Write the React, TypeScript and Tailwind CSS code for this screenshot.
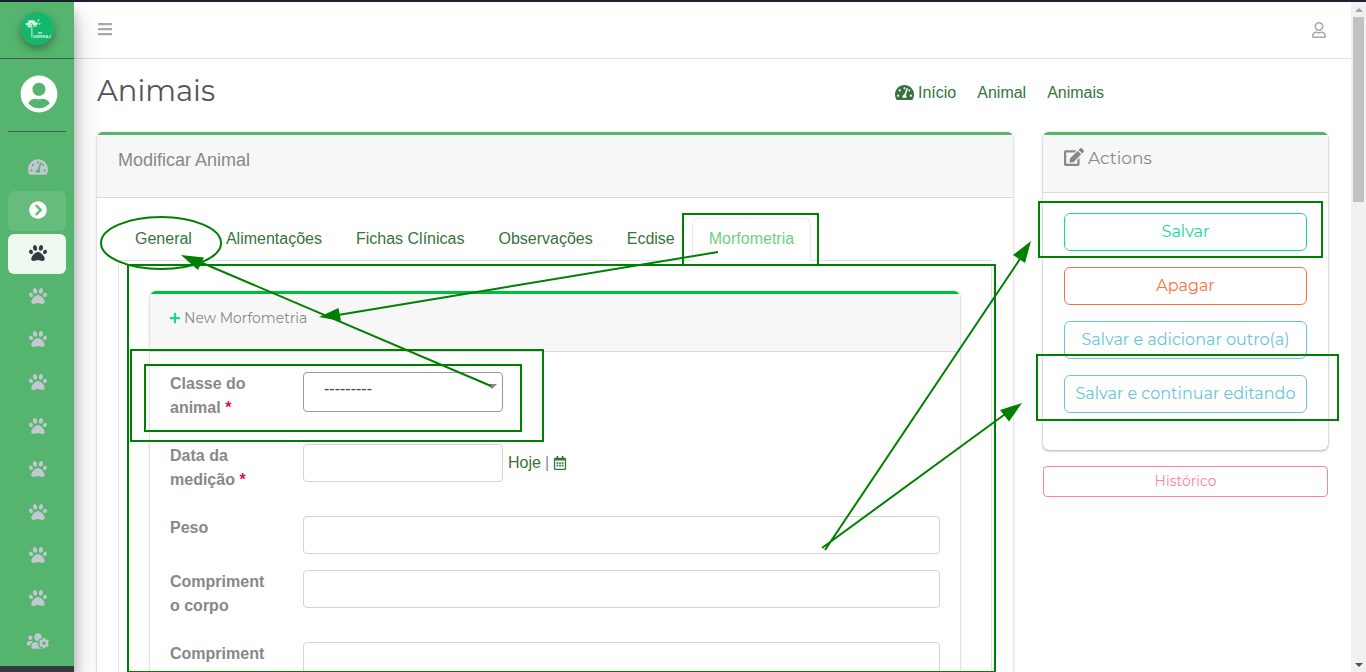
import React from "react";
import {
  FaBars, FaRegUser, FaTachometerAlt, FaChevronCircleRight, FaPaw, FaUsersCog,
  FaEdit, FaPlus, FaRegCalendarAlt, FaUserCircle,
} from "react-icons/fa";

const BODY = "font-['Liberation_Sans',Arial,sans-serif]";
const DISPLAY = "font-['Montserrat',Inter,sans-serif]";

function Logo() {
  return (
    <svg viewBox="0 0 33 33" className="size-[33px] rounded-full shadow-[0_4px_8px_rgba(0,0,0,0.35)]" role="img" aria-label="SERRAJ">
      <circle cx="16.5" cy="16.5" r="16.5" fill="#14b76d" />
      <g fill="#d4f1e0">
        <ellipse cx="7.500" cy="12" rx="3" ry="1.600" />
        <ellipse cx="10.500" cy="9.500" rx="3.600" ry="1.500" />
        <ellipse cx="14" cy="11.500" rx="3" ry="1.500" />
        <ellipse cx="8.500" cy="14.500" rx="2.200" ry="0.900" />
        <ellipse cx="14" cy="14" rx="2" ry="0.800" />
        <path d="M16 8.500l2.500-1.500-.6 2.600zM17.500 11l2.500.6-1.700 1.500zM10.200 12h.8l.4 4v9.500h-1V16z" />
        <path d="M17 20.300h4v1.200h-4z" />
      </g>
      <text x="12" y="26" fontSize="4.400" fontWeight="700" fill="#d4f1e0" fontFamily="Liberation Sans">SERRAJ</text>
    </svg>
  );
}

const paws = ["Aves", "Mamíferos", "Répteis", "Anfíbios", "Peixes", "Insetos", "Aracnídeos", "Outros"];

function Sidebar() {
  const item = "flex h-10 items-center justify-center rounded-md pb-[3px] pl-px";
  return (
    <aside className="relative z-10 flex w-[74px] shrink-0 flex-col bg-[#55b46d] text-[#c2c7d0] shadow-[0_14px_28px_rgba(0,0,0,0.25),0_10px_10px_rgba(0,0,0,0.22)]">
      <a href="#inicio" className="flex h-[57px] shrink-0 items-start justify-center border-b border-[#4b545c] pt-2.5">
        <Logo />
      </a>
      <div className="mx-2 flex h-[73px] shrink-0 items-center justify-center border-b border-[#4b545c] pb-0.5 pl-1">
        <FaUserCircle className="size-[38px] text-white" />
      </div>
      <nav className="mx-2 mt-4 flex h-[515px] shrink-0 flex-col justify-between">
        <a href="#painel" aria-label="Painel" className={item}><FaTachometerAlt className="size-5" /></a>
        <a href="#menu" aria-label="Menu" className={`${item} bg-white/10 text-white`}><FaChevronCircleRight className="size-[18px]" /></a>
        <a href="#animais" aria-label="Animais" className={`${item} bg-white/90 text-[#343a40]`}><FaPaw className="size-[18px]" /></a>
        {paws.map((p) => (
          <a key={p} href={`#${p}`} aria-label={p} className={item}><FaPaw className="size-[18px]" /></a>
        ))}
        <a href="#usuarios" aria-label="Usuários" className={item}><FaUsersCog className="size-[22px]" /></a>
      </nav>
      <div className="mt-auto h-1.5 shrink-0 bg-[#343a40]" />
    </aside>
  );
}

const tabs = ["General", "Alimentações", "Fichas Clínicas", "Observações", "Ecdise", "Morfometria"];

function Row({ id, label, required, children }: { id: string; label: string; required?: boolean; children?: React.ReactNode }) {
  return (
    <div className="mb-4 flex items-start">
      <label htmlFor={id} className="mr-8 w-[101px] shrink-0 pb-2 font-bold leading-6 wrap-anywhere">
        {label}
        {required && <>{" "}<span className="text-[#dc143c]">*</span></>}
      </label>
      {children ?? <input id={id} className="h-[38px] min-w-0 flex-1 rounded border border-[#ced4da] bg-white px-3" />}
    </div>
  );
}

function MorfometriaCard() {
  return (
    <section className="rounded-md border-t-[3px] border-[#00bc41] shadow-[0_0_1px_rgba(0,0,0,0.25),0_1px_3px_rgba(0,0,0,0.25)]">
      <h3 className={`flex h-[58px] items-start gap-[3px] border-b border-black/12 bg-[#f7f7f7] px-[19px] pt-3 text-sm leading-6 text-[#888] ${DISPLAY}`}>
        <FaPlus className="mt-1.5 size-3 text-[#14d99b]" />
        New Morfometria
      </h3>
      <div className="px-5 pt-5">
        <Row id="classe" label="Classe do animal" required>
          <div className="relative w-[200px]">
            <select id="classe" className="block h-10 w-full appearance-none rounded border border-[#999] bg-white pb-1.5 pl-5 text-[#444]">
              <option>---------</option>
            </select>
            <span className="pointer-events-none absolute top-3 right-1.5 border-x-[5px] border-t-[5px] border-x-transparent border-t-[#888]" />
          </div>
        </Row>
        <Row id="data" label="Data da medição" required>
          <input id="data" className="h-[38px] w-[200px] rounded border border-[#ced4da] bg-white px-3" />
          <span className="ml-[5px] flex h-[38px] items-center gap-1">
            <a href="#hoje" className="text-[#36733f]">Hoje</a>|
            <a href="#calendario" aria-label="Calendário" className="text-[#36733f]"><FaRegCalendarAlt className="size-3.5" /></a>
          </span>
        </Row>
        <Row id="peso" label="Peso" />
        <Row id="corpo" label="Comprimento corpo" />
        <Row id="outro" label="Compriment" />
      </div>
    </section>
  );
}

function MainCard() {
  return (
    <section className="min-w-0 flex-1 rounded-md border-t-[3px] border-[#55b46d] bg-white shadow-[0_0_1px_rgba(0,0,0,0.25),0_1px_3px_rgba(0,0,0,0.25)]">
      <h2 className="h-[63px] border-b border-black/12 bg-[#f7f7f7] px-[21px] pt-2.5 text-lg leading-[30px] text-[#888]">Modificar Animal</h2>
      <div className="px-[21px] pt-5">
        <div role="tablist" className="flex border-b border-[#dee2e6]">
          {tabs.map((t) => (
            <button
              key={t}
              role="tab"
              aria-selected={t === "Morfometria"}
              className={
                t === "Morfometria"
                  ? "-mb-px h-[43px] rounded-t-md border border-b-0 border-[#ebebeb] bg-white px-4 pb-0.5 text-[#6fcf85]"
                  : "h-[42px] border border-transparent px-4 text-[#36733f]"
              }
            >
              {t}
            </button>
          ))}
        </div>
        <div className="rounded-tr-md border-x border-[#dee2e6] px-[31px] pt-[30px]">
          <MorfometriaCard />
        </div>
      </div>
    </section>
  );
}

function Actions() {
  const base = "h-[38px] rounded-md border bg-white text-base";
  return (
    <aside className={`w-[285px] shrink-0 ${DISPLAY}`}>
      <section className="h-[318px] rounded-md border-t-[3px] border-[#55b46d] bg-white shadow-[0_0_1px_rgba(0,0,0,0.3),0_1px_3px_rgba(0,0,0,0.3)]">
        <h2 className="flex h-[58px] items-start gap-1 border-b border-black/12 bg-[#f7f7f7] px-[21px] pt-2 text-[17px] leading-[30px] text-[#888]">
          <FaEdit className="mt-1 size-5 text-[#888]" />
          Actions
        </h2>
        <div className="flex flex-col gap-4 px-[21px] pt-5">
          <button className={`${base} border-[#14d99b] text-[#14d99b]`}>Salvar</button>
          <button className={`${base} border-[#fd7040] text-[#fd7040]`}>Apagar</button>
          <button className={`${base} border-[#69c3db] text-[#69c3db]`}>Salvar e adicionar outro(a)</button>
          <button className={`${base} border-[#69c3db] text-[#69c3db]`}>Salvar e continuar editando</button>
        </div>
      </section>
      <button className="mt-4 h-[31px] w-full rounded border border-[#ff8596] bg-white pb-0.5 text-sm text-[#ff8596]">Histórico</button>
    </aside>
  );
}

function Annotations() {
  return (
    <svg className="pointer-events-none absolute top-0 left-0 z-20 h-[672px] w-[1366px]" viewBox="0 0 1366 672" fill="none" stroke="#008000" strokeWidth="2" aria-hidden="true">
      <ellipse cx="161" cy="243" rx="60" ry="26" />
      <path d="M683 265V214H818V265" />
      <rect x="128" y="265" width="867" height="407" />
      <rect x="131" y="350" width="412" height="91" />
      <rect x="145" y="365" width="376" height="66" />
      <rect x="1039" y="202" width="283" height="55" />
      <rect x="1037" y="355" width="301" height="65" />
      <path d="M718 252L338 315M491 386L200 262M825 550L1020 259M822 548L1008 412" />
      <g fill="#008000" stroke="none">
        <path d="M319 317L338.500 308L341 321Z" />
        <path d="M181 255L204 257.500L198 270Z" />
        <path d="M1031 241L1025 263L1013 255Z" />
        <path d="M1022 403L1009 421.500L1000 410Z" />
      </g>
    </svg>
  );
}

function ScrollRail() {
  return (
    <div className="flex w-[15px] shrink-0 flex-col items-center bg-[#f1f1f1]" aria-hidden="true">
      <span className="mt-1.5 border-x-4 border-b-4 border-x-transparent border-b-[#a3a3a3]" />
      <span className="mt-[5px] h-[185px] w-[11px] bg-[#c1c1c1]" />
      <span className="mt-auto mb-[5px] border-x-4 border-t-4 border-x-transparent border-t-[#505050]" />
    </div>
  );
}

export default function App() {
  return (
    <div className={`relative flex h-screen flex-col overflow-hidden bg-white text-base text-[#888] ${BODY}`}>
      <div className="h-0.5 shrink-0 bg-[#1b2130]" />
      <div className="flex min-h-0 flex-1">
        <Sidebar />
        <main className="min-w-0 flex-1 overflow-hidden">
          <header className="flex h-[57px] items-center justify-between border-b border-[#dee2e6] px-[23px]">
            <button aria-label="Abrir menu" className="pb-0.5 text-[#a8a8a8]"><FaBars className="size-4" /></button>
            <button aria-label="Conta" className="mr-px text-[#a8a8a8]"><FaRegUser className="size-4" /></button>
          </header>
          <div className="flex h-[73px] items-center px-[23px] pb-1.5">
            <h1 className={`flex-1 pb-1 text-[29px] leading-9 text-[#555] ${DISPLAY}`}>Animais</h1>
            <nav className="flex w-[433px] gap-[21px] text-[#36733f]">
              <a href="#inicio" className="flex items-center gap-1"><FaTachometerAlt className="size-[19px]" />Início</a>
              <a href="#animal">Animal</a>
              <a href="#lista">Animais</a>
            </nav>
          </div>
          <div className="flex items-start gap-[30px] px-[23px]">
            <MainCard />
            <Actions />
          </div>
        </main>
        <ScrollRail />
      </div>
      <Annotations />
    </div>
  );
}
